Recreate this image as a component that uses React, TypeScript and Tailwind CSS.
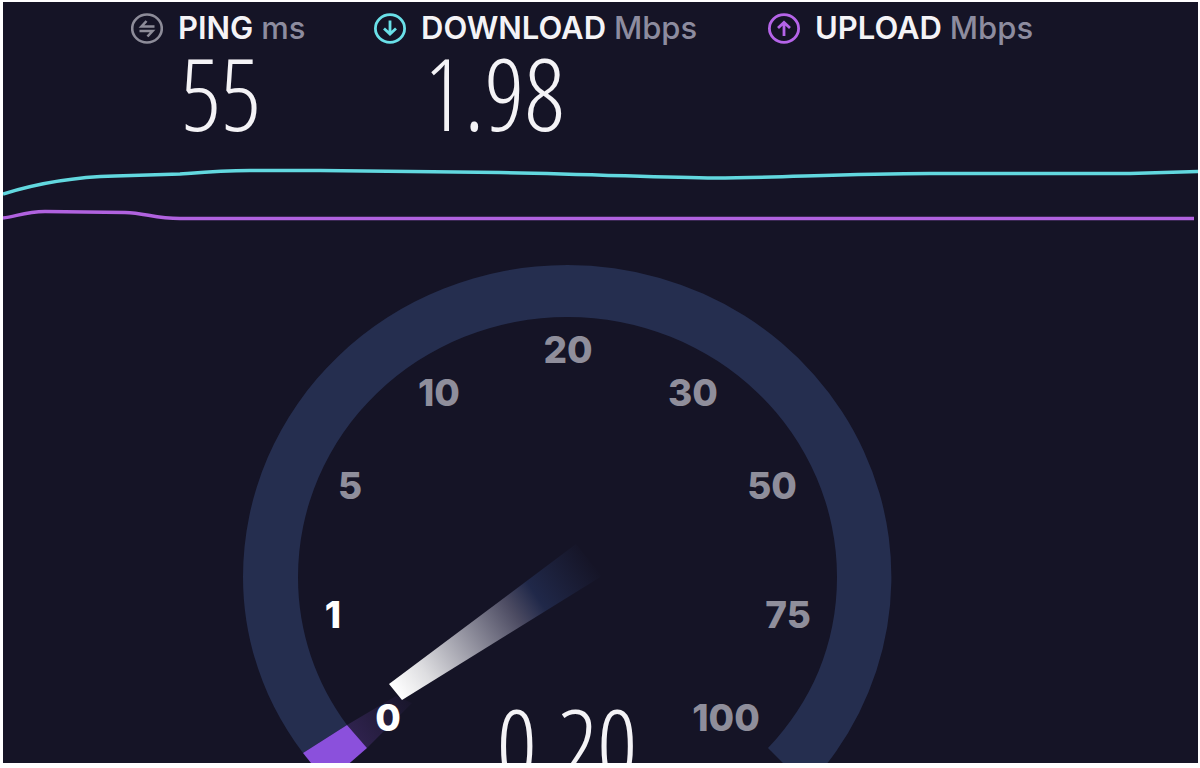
import type { ReactNode } from "react";

type MetricProps = { icon: ReactNode; name: string; unit: string; value?: string };

function Metric({ icon, name, unit, value }: MetricProps) {
  return (
    <section className="flex gap-[15px]">
      {icon}
      <div>
        <h2 className="text-[31px] leading-8 font-semibold whitespace-nowrap text-[#f4f3f6]">
          {name} <span className="font-medium text-[#8d8c9f]">{unit}</span>
        </h2>
        <p className="h-[104px] pl-[3px] font-['Open_Sans_Condensed_Light','Roboto_Condensed',sans-serif] text-[100px] leading-[96px] font-extralight text-[#f4f3f6]">
          {value}
        </p>
      </div>
    </section>
  );
}

const iconClass = "mt-px h-8 w-8 shrink-0";

function PingIcon() {
  return (
    <svg className={iconClass} viewBox="0 0 32 32" fill="none" stroke="#8d8c99" strokeWidth="2.6" aria-hidden="true">
      <ellipse cx="16" cy="15.500" rx="14.8" ry="14" />
      <path d="M23.5 13.500H10.500L15.500 8M8.500 18H21.500L16.500 23.500" />
    </svg>
  );
}

function DownIcon() {
  return (
    <svg className={iconClass} viewBox="0 0 32 32" fill="none" stroke="#6ae0e8" strokeWidth="2.8" aria-hidden="true">
      <ellipse cx="16" cy="15.500" rx="14.6" ry="13.800" />
      <path d="M16 7.500V21M10 15.500L16 21L22 15.500" />
    </svg>
  );
}

function UpIcon() {
  return (
    <svg className={iconClass} viewBox="0 0 32 32" fill="none" stroke="#b564e8" strokeWidth="2.8" aria-hidden="true">
      <ellipse cx="16" cy="15.500" rx="14.6" ry="13.800" />
      <path d="M16 23V9.500M10 15L16 9.500L22 15" />
    </svg>
  );
}

const ticks = [
  { label: "0", x: 388, y: 731, active: true },
  { label: "1", x: 333, y: 628, active: true },
  { label: "5", x: 350, y: 499 },
  { label: "10", x: 439, y: 406 },
  { label: "20", x: 568, y: 363 },
  { label: "30", x: 693, y: 406 },
  { label: "50", x: 772, y: 499 },
  { label: "75", x: 788, y: 628 },
  { label: "100", x: 726, y: 731 },
];

function Gauge() {
  return (
    <svg className="block w-full" viewBox="3 265 1195 498" role="img" aria-label="Speed gauge">
      <defs>
        <linearGradient id="needle" gradientUnits="userSpaceOnUse" x1="396" y1="692" x2="592" y2="560">
          <stop offset="0" stopColor="#ffffff" />
          <stop offset="0.15" stopColor="#dddde0" />
          <stop offset="0.6" stopColor="#4c4b62" />
          <stop offset="0.72" stopColor="#202849" />
          <stop offset="1" stopColor="#151426" />
        </linearGradient>
        <linearGradient id="trail" gradientUnits="userSpaceOnUse" x1="352" y1="738" x2="412" y2="696">
          <stop offset="0" stopColor="#30234f" />
          <stop offset="1" stopColor="#171529" />
        </linearGradient>
      </defs>
      <path
        d="M303 753C265 703 243 642 243 577A324.500 312 0 0 1 567.500 265A324 312 0 0 1 807 787L768 748C811 703 837 645 837 577A269.500 260 0 0 0 567.500 317A269.500 260 0 0 0 298 577C298 632 316 683 347 725Z"
        fill="#252e4f"
      />
      <path d="M347 725L396 696L412 703L367 748Z" fill="url(#trail)" />
      <path d="M303 753L347 725L367 748L344 768H315Z" fill="#8b50dc" />
      <path d="M389 684L576 544L602 576L402 700Z" fill="url(#needle)" />
      {ticks.map((tick) => (
        <text
          key={tick.label}
          x={tick.x}
          y={tick.y}
          textAnchor="middle"
          fontSize="37"
          fontWeight="800"
          fill={tick.active ? "#ffffff" : "#8f8e9b"}
        >
          {tick.label}
        </text>
      ))}
      <text
        x="567"
        y="782"
        textAnchor="middle"
        fontSize="100"
        fill="#f4f3f6"
        className="font-['Open_Sans_Condensed_Light','Roboto_Condensed',sans-serif] font-extralight"
      >
        0.20
      </text>
    </svg>
  );
}

function History() {
  return (
    <svg className="block h-[70px] w-full" viewBox="3 160 1195 70" preserveAspectRatio="none" fill="none" strokeWidth="3.5" role="img" aria-label="Speed history">
      <path stroke="#62d8df" d="M3 194C35 184 70 177 115 176L180 174C205 172 220 170.500 250 170.500H320L500 172.500C600 174 660 178 715 178C780 178 840 173.500 930 173.500H1130L1198 171.500" />
      <path stroke="#b062df" d="M3 218C15 217 25 211.500 45 211.500L125 212.500C145 213 155 218.500 180 218.500H1194" />
    </svg>
  );
}

export default function App() {
  return (
    <div className="bg-white pt-0.5 pr-0.5 pb-[5px] pl-[3px] font-['Inter',sans-serif]">
      <main className="overflow-hidden bg-[#151426]">
        <header className="grid grid-cols-[243px_394px_1fr] pt-2.5 pl-32">
          <Metric icon={<PingIcon />} name="PING" unit="ms" value="55" />
          <Metric icon={<DownIcon />} name="DOWNLOAD" unit="Mbps" value="1.98" />
          <Metric icon={<UpIcon />} name="UPLOAD" unit="Mbps" />
        </header>
        <div className="mt-3">
          <History />
        </div>
        <div className="mt-[35px]">
          <Gauge />
        </div>
      </main>
    </div>
  );
}
